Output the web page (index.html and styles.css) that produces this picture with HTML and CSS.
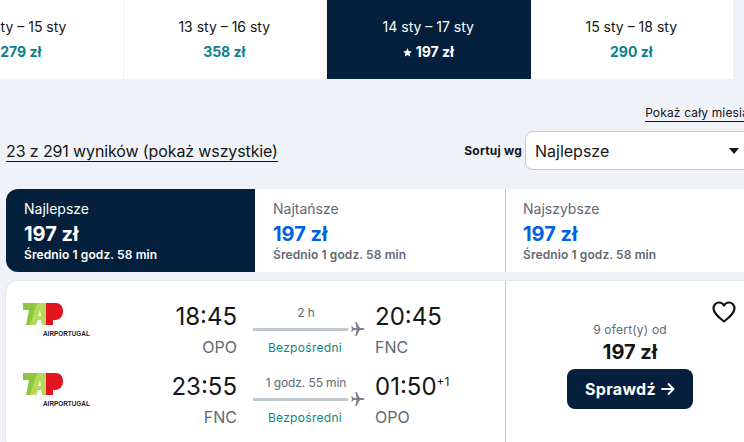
FILE: index.html
```html
<!DOCTYPE html>
<html lang="pl">
<head>
  <meta charset="UTF-8">
  <title>Wyniki lotów</title>
  <link rel="stylesheet" href="styles.css">
</head>
<body>
  <div class="dates">
    <div class="date"><div class="date-label">12 sty – 15 sty</div><div class="date-price">279 zł</div></div>
    <div class="date"><div class="date-label">13 sty – 16 sty</div><div class="date-price">358 zł</div></div>
    <div class="date date-active"><div class="date-label">14 sty – 17 sty</div><div class="date-price"><svg class="star" width="9" height="9" viewBox="0 0 10 10"><path d="M5 .3l1.400 3.100 3.400.4-2.500 2.300.7 3.400L5 7.800 2 9.500l.7-3.400L.2 3.800l3.400-.4z" fill="#fff"/></svg>197 zł</div></div>
    <div class="date"><div class="date-label">15 sty – 18 sty</div><div class="date-price">290 zł</div></div>
  </div>

  <div class="main">
    <div class="month-row"><a class="month-link">Pokaż cały miesiąc</a></div>

    <div class="sort-row">
      <a class="count">23 z 291 wyników (pokaż wszystkie)</a>
      <div class="sort">
        <span class="sort-label">Sortuj wg</span>
        <div class="select">
          <span>Najlepsze</span>
          <svg class="caret" width="10" height="6" viewBox="0 0 10 6"><path d="M0 0h10L5 6z" fill="#161616"/></svg>
        </div>
      </div>
    </div>

    <div class="tabs">
      <div class="tab tab-active"><div class="tab-name">Najlepsze</div><div class="tab-price">197 zł</div><div class="tab-time">Średnio 1 godz. 58 min</div></div>
      <div class="tab"><div class="tab-name">Najtańsze</div><div class="tab-price">197 zł</div><div class="tab-time">Średnio 1 godz. 58 min</div></div>
      <div class="tab tab-last"><div class="tab-name">Najszybsze</div><div class="tab-price">197 zł</div><div class="tab-time">Średnio 1 godz. 58 min</div></div>
    </div>

    <div class="card">
      <div class="legs">
        <div class="leg">
          <svg class="logo" width="70" height="34" viewBox="0 0 70 34">
            <path d="M0 0h20l-2 7h-6L8 22H3L6 7H0z" fill="#8fc63f"/>
            <path d="M14 0h9l2 22h-6l-1-5h-3l-2 5H7zM17 7l-2 6h3z" fill="#b5d95a" fill-rule="evenodd"/>
            <path d="M23 0h10c4 0 7 3 7 8s-3 9-8 9h-2v5h-7z" fill="#e2141f"/>
            <text class="logo-text" x="20" y="33">AIRPORTUGAL</text>
          </svg>
          <div class="place place-from"><div class="time">18:45</div><div class="code">OPO</div></div>
          <div class="route">
            <div class="duration">2 h</div>
            <div class="line-row">
              <div class="line"></div>
              <svg width="14" height="14" viewBox="0 0 14 14"><path d="M13.5 7c0-.6-.8-1-1.600-1H9L5.600 0H4.200l1.500 6H2.600L1.300 4.300H.3L1 7 .3 9.700h1L2.600 8h3.100L4.200 14h1.400L9 8h2.900c.8 0 1.600-.4 1.600-1z" fill="#7c8090"/></svg>
            </div>
            <div class="stops">Bezpośredni</div>
          </div>
          <div class="place"><div class="time">20:45</div><div class="code">FNC</div></div>
        </div>
        <div class="leg">
          <svg class="logo" width="70" height="34" viewBox="0 0 70 34">
            <path d="M0 0h20l-2 7h-6L8 22H3L6 7H0z" fill="#8fc63f"/>
            <path d="M14 0h9l2 22h-6l-1-5h-3l-2 5H7zM17 7l-2 6h3z" fill="#b5d95a" fill-rule="evenodd"/>
            <path d="M23 0h10c4 0 7 3 7 8s-3 9-8 9h-2v5h-7z" fill="#e2141f"/>
            <text class="logo-text" x="20" y="33">AIRPORTUGAL</text>
          </svg>
          <div class="place place-from"><div class="time">23:55</div><div class="code">FNC</div></div>
          <div class="route">
            <div class="duration">1 godz. 55 min</div>
            <div class="line-row">
              <div class="line"></div>
              <svg width="14" height="14" viewBox="0 0 14 14"><path d="M13.5 7c0-.6-.8-1-1.600-1H9L5.600 0H4.200l1.500 6H2.600L1.300 4.300H.3L1 7 .3 9.700h1L2.600 8h3.100L4.200 14h1.400L9 8h2.900c.8 0 1.600-.4 1.600-1z" fill="#7c8090"/></svg>
            </div>
            <div class="stops">Bezpośredni</div>
          </div>
          <div class="place"><div class="time">01:50<sup class="plus">+1</sup></div><div class="code">OPO</div></div>
        </div>
      </div>

      <div class="offer">
        <svg class="heart" width="24" height="22" viewBox="0 0 24 22"><path d="M12 20.500C5 15 1.500 11.500 1.500 7.200 1.500 4 4 1.500 7 1.500c2 0 3.900 1 5 3 1.100-2 3-3 5-3 3 0 5.500 2.500 5.500 5.700 0 4.300-3.500 7.800-10.500 13.300z" fill="none" stroke="#161616" stroke-width="2.200" stroke-linejoin="round"/></svg>
        <div class="offer-count">9 ofert(y) od</div>
        <div class="offer-price">197 zł</div>
        <a class="check">Sprawdź
          <svg width="14" height="14" viewBox="0 0 14 14"><path d="M1 7h11M7.500 2l5 5-5 5" fill="none" stroke="#fff" stroke-width="1.800" stroke-linecap="round" stroke-linejoin="round"/></svg>
        </a>
      </div>
    </div>
  </div>
</body>
</html>
```

FILE: styles.css
```css
html, body {
  height: 442px;
  overflow: hidden;
}
body {
  margin: 0;
  width: 744px;
  background-color: #eff3f8;
  color: #161616;
  font-family: "Inter", sans-serif;
  font-size: 14px;
}

.dates {
  display: flex;
  height: 79px;
  width: 1000px;
  margin-left: -80px;
}
.date {
  width: 203.500px;
  flex: none;
  background-color: #fff;
  border-right: 1px solid #eff3f8;
  box-sizing: border-box;
  text-align: center;
  padding: 18px 1px 0 0;
}
.date-label {
  font-size: 14px;
  line-height: 18px;
}
.date-price {
  margin-top: 7px;
  font-size: 14px;
  line-height: 18px;
  font-weight: 700;
  color: #0c838a;
}
.date-active {
  background-color: #05203c;
  border-right: none;
  color: #fff;
}
.date-active .date-price {
  color: #fff;
}
.star {
  margin-right: 4px;
}

.main {
  width: 750px;
  margin-left: 6px;
}
.month-row {
  display: flex;
  justify-content: flex-end;
  padding-top: 26px;
  height: 26px;
}
.month-link {
  font-size: 12px;
  letter-spacing: 0.15px;
  line-height: 16px;
  height: 16px;
  border-bottom: 1px solid #161616;
  white-space: nowrap;
}
.sort-row {
  display: flex;
  align-items: center;
  justify-content: space-between;
  height: 39px;
}
.count {
  margin-top: 2px;
  font-size: 16px;
  letter-spacing: -0.12px;
  line-height: 20px;
  border-bottom: 1px solid #161616;
}
.sort {
  display: flex;
  align-items: center;
  gap: 3px;
}
.sort-label {
  font-size: 12px;
  letter-spacing: 0.2px;
  font-weight: 700;
}
.select {
  width: 231px;
  height: 39px;
  box-sizing: border-box;
  display: flex;
  align-items: center;
  justify-content: space-between;
  padding: 0 16px 0 9px;
  background-color: #fff;
  border: 1px solid #c1c7cf;
  border-radius: 8px;
  font-size: 16px;
}

.tabs {
  display: flex;
  margin-top: 19px;
  height: 83px;
}
.tab {
  width: 250px;
  box-sizing: border-box;
  padding: 11px 18px 0;
  background-color: #fff;
  color: #626971;
}
.tab-active {
  background-color: #05203c;
  color: #fff;
  border-radius: 12px 0 0 12px;
  width: 249px;
}
.tab-last {
  padding-left: 17px;
  border-left: 1px solid #c1c7cf;
  border-radius: 0 12px 12px 0;
}
.tab-name {
  font-size: 14px;
  line-height: 18px;
}
.tab-price {
  font-size: 20px;
  line-height: 24px;
  font-weight: 700;
  color: #0062e3;
  margin-top: 4px;
}
.tab-active .tab-price {
  color: #fff;
}
.tab-time {
  margin-top: 1px;
  font-size: 12px;
  letter-spacing: 0.1px;
  line-height: 16px;
  font-weight: 600;
}

.card {
  display: flex;
  margin-top: 9px;
  height: 170px;
  background-color: #fff;
  border-radius: 12px;
  box-shadow: 0 0 2px rgba(37, 32, 31, 0.2);
}
.legs {
  width: 499px;
  box-sizing: border-box;
  padding: 20px 0 0 17px;
  display: flex;
  flex-direction: column;
  gap: 10px;
}
.leg {
  display: flex;
  height: 60px;
}
.logo {
  flex: none;
  margin-top: 2px;
}
.logo-text {
  font-family: "Liberation Sans", sans-serif;
  font-size: 6.400px;
  font-weight: 700;
  fill: #222;
}
.place {
  width: 90px;
}
.place-from {
  width: 144px;
  text-align: right;
  margin-right: 16px;
}
.time {
  font-size: 24px;
  line-height: 32px;
  white-space: nowrap;
}
.plus {
  font-size: 12px;
  line-height: 0;
  vertical-align: 9px;
}
.code {
  font-size: 16px;
  line-height: 22px;
  margin-top: 3px;
  color: #626971;
}
.route {
  width: 112px;
  margin-right: 10px;
  padding-top: 4px;
  flex: none;
}
.duration {
  width: 106px;
  text-align: center;
  font-size: 12px;
  letter-spacing: -0.1px;
  line-height: 16px;
  color: #626971;
  white-space: nowrap;
}
.line-row {
  display: flex;
  align-items: center;
  gap: 3px;
  height: 14px;
  margin-top: 1px;
}
.line {
  width: 96px;
  height: 3px;
  background-color: #c1c7cf;
}
.stops {
  width: 104px;
  text-align: center;
  margin-top: 4px;
  font-size: 12px;
  letter-spacing: 0.3px;
  line-height: 16px;
  color: #0c838a;
}

.offer {
  position: relative;
  flex: 1;
  border-left: 1px solid #c1c7cf;
  display: flex;
  flex-direction: column;
  align-items: center;
  padding: 41px 2px 0 0;
}
.heart {
  position: absolute;
  top: 20px;
  left: 206px;
}
.offer-count {
  font-size: 12px;
  letter-spacing: 0.2px;
  line-height: 16px;
  color: #626971;
}
.offer-price {
  font-size: 20px;
  line-height: 24px;
  font-weight: 700;
  margin-top: 2px;
}
.check {
  display: flex;
  align-items: center;
  justify-content: center;
  gap: 5px;
  width: 126px;
  height: 40px;
  margin-top: 5px;
  background-color: #05203c;
  border-radius: 8px;
  color: #fff;
  font-size: 16px;
  letter-spacing: 0.3px;
  font-weight: 700;
}
```
